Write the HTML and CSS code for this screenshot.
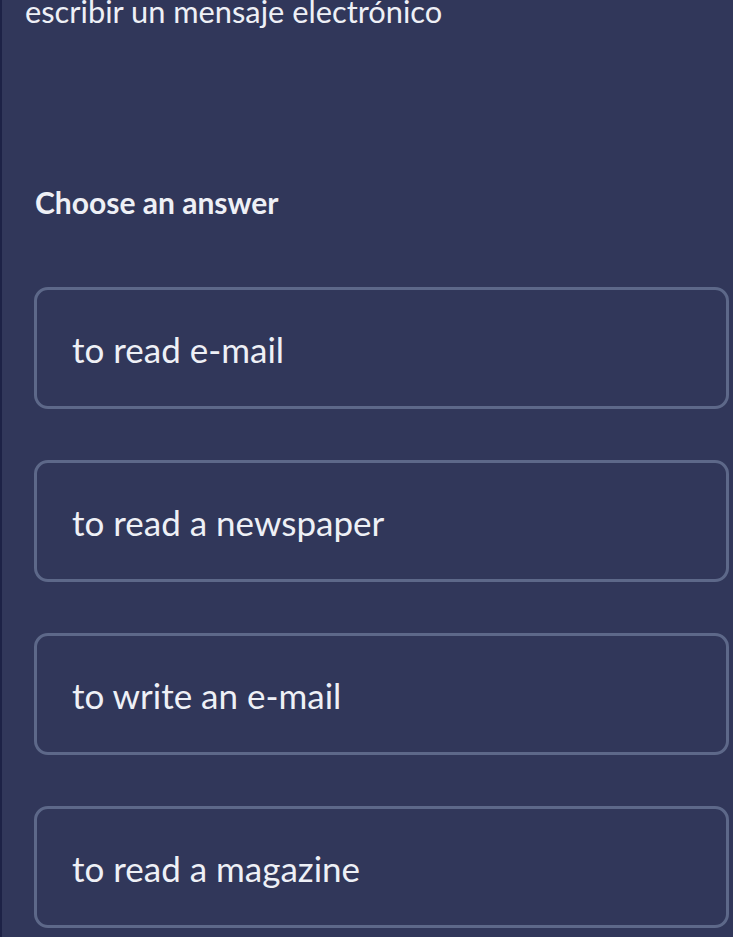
FILE: index.html
```html
<!DOCTYPE html>
<html lang="en">
<head>
<meta charset="utf-8">
<title>Choose an answer</title>
<link rel="stylesheet" href="styles.css">
</head>
<body>
<main class="page">
  <h1 class="prompt">escribir un mensaje electrónico</h1>
  <h2 class="label">Choose an answer</h2>
  <div class="answers">
    <button class="answer">to read e-mail</button>
    <button class="answer">to read a newspaper</button>
    <button class="answer">to write an e-mail</button>
    <button class="answer">to read a magazine</button>
  </div>
</main>
</body>
</html>
```

FILE: styles.css
```css
html, body {
  margin: 0;
  padding: 0;
  background: #31375a;
  height: 100%;
  overflow: hidden;
}
body {
  font-family: Lato, "Open Sans", sans-serif;
  color: #eef0f6;
}
.page {
  min-height: 100%;
  box-sizing: border-box;
  border-left: 2px solid #1d2246;
  padding: 0 4px 0 32px;
  display: flex;
  flex-direction: column;
}
.prompt {
  margin: -8px 0 0 -9px;
  font-size: 30.8px;
  font-weight: 400;
  line-height: 40px;
}
.label {
  margin: 152px 0 0 1px;
  font-size: 30px;
  font-weight: 700;
  line-height: 36px;
}
.answers {
  margin-top: 67px;
  display: flex;
  flex-direction: column;
  gap: 51px;
}
.answer {
  height: 122px;
  box-sizing: border-box;
  border: 3px solid #5d6889;
  border-radius: 14px;
  background: transparent;
  color: #eef0f6;
  font-family: Lato, "Open Sans", sans-serif;
  font-size: 35px;
  text-align: left;
  padding: 2px 0 0 35px;
  display: flex;
  align-items: center;
}
```
